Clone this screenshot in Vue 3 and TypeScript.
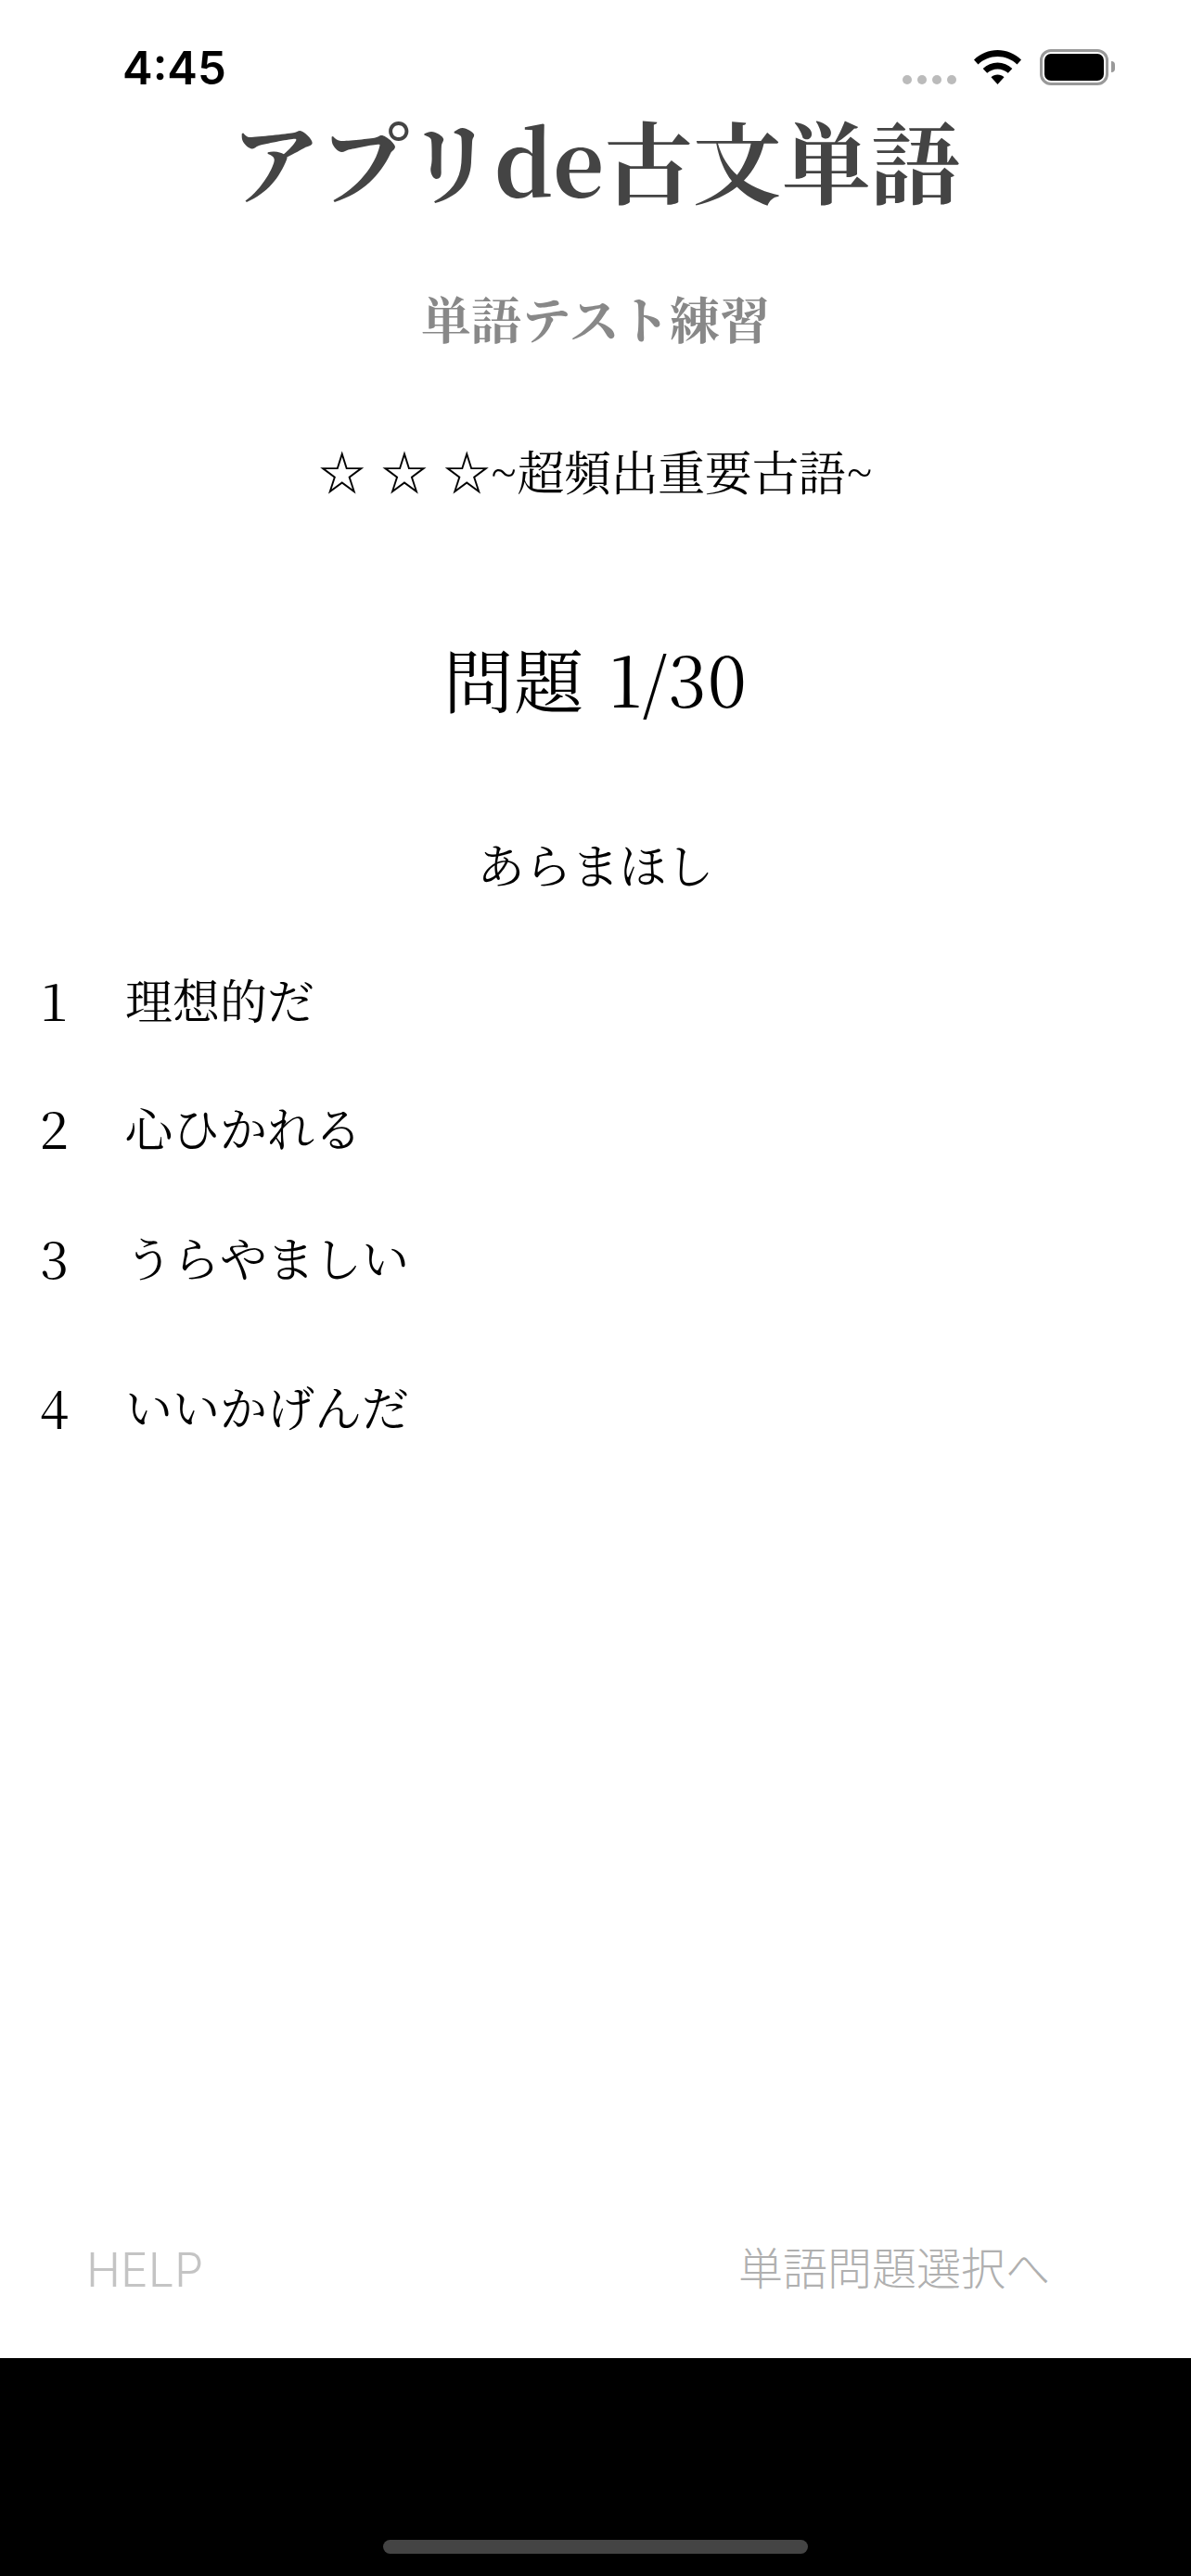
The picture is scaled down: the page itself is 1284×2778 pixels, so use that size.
<script setup lang="ts">
interface Choice { no: string; text: string; cls: string }
const choices: Choice[] = [
  { no: '1', text: '理想的だ', cls: 'r1' },
  { no: '2', text: '心ひかれる', cls: 'r2' },
  { no: '3', text: 'うらやましい', cls: 'r3' },
  { no: '4', text: 'いいかげんだ', cls: 'r4' },
]
</script>

<template>
  <div class="screen">
    <div class="content">
      <header class="status">
        <span class="time">4:45</span>
        <div class="status-right">
          <div class="dots"><i></i><i></i><i></i><i></i></div>
          <svg class="wifi" viewBox="0 0 51 37" width="51" height="37">
            <path d="M25.5 0C35 0 44 3.800 51 10.500L46.500 15.500C40.800 10 33.500 7 25.500 7S10.200 10 4.500 15.500L0 10.500C7 3.800 16 0 25.500 0Z" />
            <path d="M25.500 13.500C31.500 13.500 37 15.800 41.300 19.900L36.800 24.800C33.700 22 29.800 20.400 25.500 20.400S17.300 22 14.200 24.800L9.700 19.900C14 15.800 19.500 13.500 25.500 13.500Z" />
            <path d="M25.500 26.500C28.200 26.500 30.600 27.500 32.500 29.200L25.500 37L18.500 29.200C20.400 27.500 22.800 26.500 25.500 26.500Z" />
          </svg>
          <div class="battery"><div class="battery-fill"></div></div>
          <div class="battery-tip"></div>
        </div>
      </header>
      <h1 class="title">アプリde古文単語</h1>
      <h2 class="subtitle">単語テスト練習</h2>
      <p class="level"><span class="stars">☆ ☆ ☆</span>~超頻出重要古語~</p>
      <p class="counter">問題 1/30</p>
      <p class="word">あらまほし</p>
      <ul class="choices">
        <li v-for="c in choices" :key="c.no" class="choice" :class="c.cls">
          <span class="no">{{ c.no }}</span>
          <span class="text">{{ c.text }}</span>
        </li>
      </ul>
      <footer class="actions">
        <span class="help">HELP</span>
        <span class="next">単語問題選択へ</span>
      </footer>
    </div>
    <div class="home-area"><div class="home-bar"></div></div>
  </div>
</template>

<style>
html, body { margin: 0; background: #fff; }
</style>

<style scoped>
.screen {
  width: 1284px;
  height: 2778px;
  display: flex;
  flex-direction: column;
  overflow: hidden;
  background: #fff;
  font-family: "Noto Serif CJK JP", "Liberation Serif", "Noto Sans CJK JP", serif;
  color: #000;
}
.content { flex: 1; display: flex; flex-direction: column; min-height: 0; }
.status {
  height: 115px;
  flex: none;
  display: flex;
  justify-content: space-between;
  align-items: flex-start;
  padding: 0 82px 0 132px;
}
.time {
  font-family: Inter, "Liberation Sans", sans-serif;
  font-weight: 600;
  font-size: 49px;
  line-height: 50px;
  margin-top: 49px;
  color: #000;
}
.status-right { display: flex; align-items: flex-start; margin-top: 53px; }
.dots { display: flex; gap: 6px; margin-top: 28px; margin-right: 19px; }
.dots i { width: 10px; height: 10px; border-radius: 50%; background: #bbb; display: block; }
.wifi { fill: #000; margin-top: 1px; margin-right: 20px; }
.battery {
  width: 74px; height: 39px; box-sizing: border-box;
  border: 3px solid #999; border-radius: 12px; padding: 2px;
}
.battery-fill { width: 100%; height: 100%; background: #000; border-radius: 7px; }
.battery-tip { width: 4px; height: 12px; margin: 13px 0 0 3px; background: #999; border-radius: 0 4px 4px 0; }
.title {
  margin: 0; font-size: 96px; line-height: 112px; font-weight: 700; color: #444; text-align: center;
}
.subtitle {
  margin: 84px 0 0; font-size: 54px; line-height: 64px; font-weight: 700; color: #888; text-align: center;
}
.level { margin: 102px 0 0; font-size: 51px; line-height: 60px; letter-spacing: -0.4px; text-align: center; }
.stars { word-spacing: 4px; }
.counter { margin: 152px 0 0; font-size: 75px; line-height: 84px; letter-spacing: 1px; word-spacing: 6px; text-align: center; }
.word { margin: 130px 0 0; font-size: 51px; line-height: 56px; text-align: center; }
.choices { list-style: none; margin: 0; padding: 0; }
.choice { display: flex; align-items: center; height: 56px; }
.r1 { margin-top: 90px; }
.r2 { margin-top: 82px; }
.r3 { margin-top: 84px; }
.r4 { margin-top: 105px; }
.no { width: 117px; text-align: center; font-size: 56px; }
.text { font-size: 51px; margin-left: 18px; }
.actions {
  margin-top: auto;
  height: 125px;
  flex: none;
  display: flex;
  justify-content: space-between;
  align-items: flex-start;
  padding: 0 152px 0 93px;
  color: #b0b0b0;
  font-family: "Noto Sans CJK JP", "Noto Sans", sans-serif;
  font-weight: 300;
}
.help { font-size: 50px; line-height: 60px; font-family: Inter, sans-serif; font-weight: 300; color: #c4c4c4; }
.next { font-size: 48px; line-height: 50px; }
.home-area { height: 235px; flex: none; background: #000; display: flex; justify-content: center; align-items: flex-start; }
.home-bar { width: 458px; height: 15px; margin-top: 196px; border-radius: 8px; background: #444; }
</style>
